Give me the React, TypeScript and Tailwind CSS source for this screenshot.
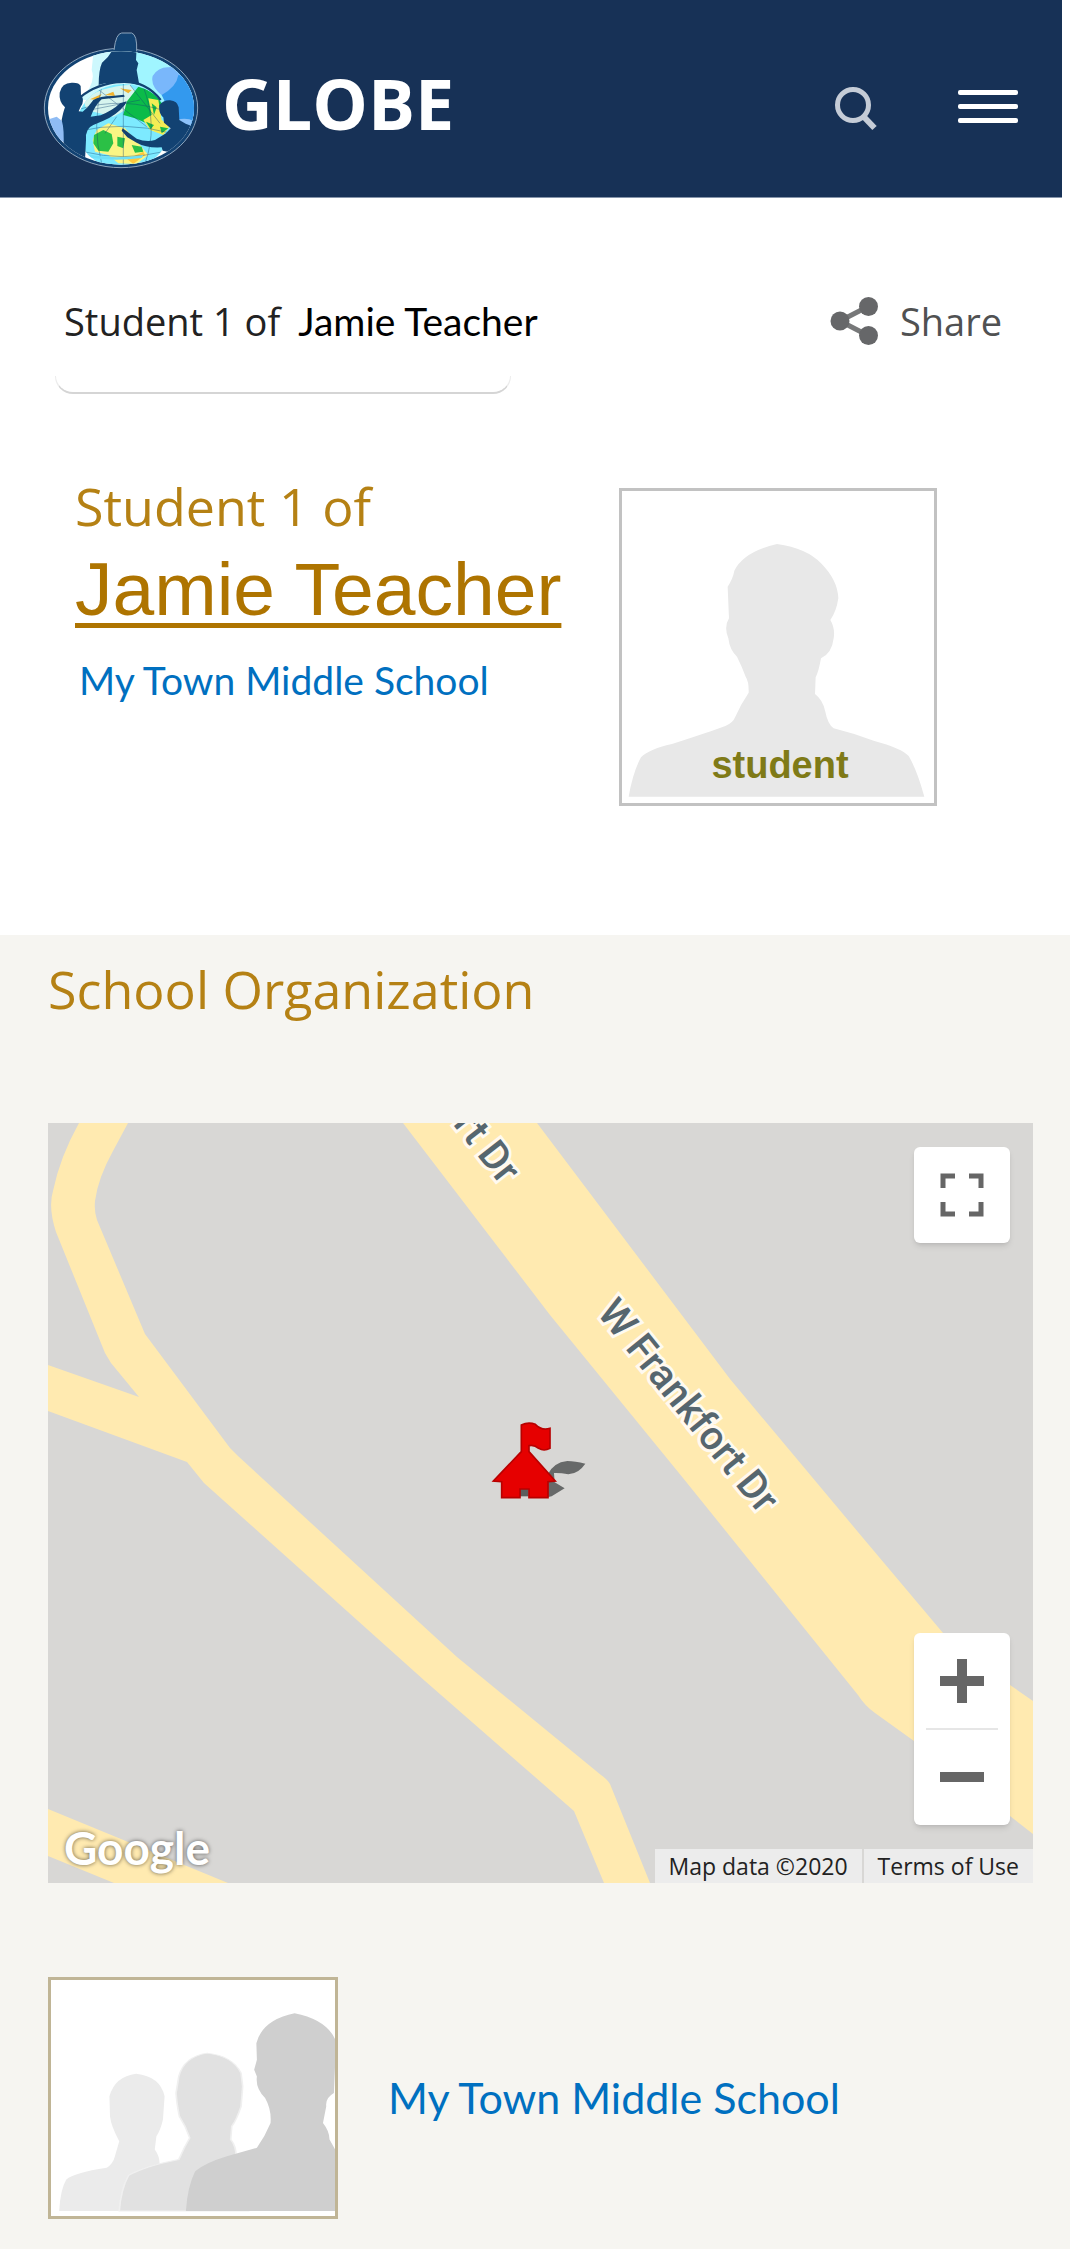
import type { ReactNode } from 'react';

const schoolName = 'My Town Middle School';
const teacherName = 'Jamie Teacher';

function GlobeLogo() {
  return (
    <svg viewBox="36 30 474 420" className="mt-0.5 h-[140px] w-[158px] shrink-0" aria-hidden="true">
      <defs>
        <clipPath id="oval">
          <ellipse cx="273" cy="264" rx="219" ry="170" />
        </clipPath>
        <clipPath id="earth">
          <ellipse cx="280" cy="320" rx="140" ry="128" />
        </clipPath>
      </defs>
      <ellipse cx="273" cy="264" rx="230" ry="179" fill="#124272" stroke="#8fa6bd" strokeWidth="3" />
      <path d="M252 90 Q258 40 275 39 L305 39 Q322 44 320 94" fill="#124272" stroke="#8fa6bd" strokeWidth="3" />
      <g clipPath="url(#oval)">
        <rect x="40" y="80" width="470" height="370" fill="#fff" />
        <path d="M192 80 L330 80 L330 240 L150 240 Q200 190 185 150Z" fill="#cdf8fd" />
        <path d="M310 80 L510 80 L510 330 L300 230Z" fill="#a0f5ff" />
        <path d="M368 168 Q385 140 418 142 Q450 120 520 140 L520 330 L440 300 L400 230 Q360 200 368 168Z" fill="#79b7fb" />
        <path d="M395 225 Q440 200 445 165 Q470 170 510 190 L510 320 L430 300Z" fill="#3399ee" />
        <path d="M440 300 Q470 290 495 305 L495 330 L450 325Z" fill="#8cc2fa" />
        <path d="M50 300 L80 290 L105 310 L108 370 L70 350Z" fill="#8fbcf4" />
        {/* Earth */}
        <g clipPath="url(#earth)">
          <rect x="130" y="180" width="300" height="270" fill="#7eeaff" />
          <path d="M160 240 Q210 200 300 195 L340 240 L250 290 L170 270Z" fill="#d6f6ee" />
          <path d="M225 225 L250 215 L255 228Z M180 238 L215 222 L205 240Z M270 205 L305 210 L295 220Z" fill="#f2b430" />
          <path d="M290 245 L325 200 L370 215 L395 250 L385 300 L350 310 L315 295 L280 285Z" fill="#0cbb4a" />
          <path d="M355 235 L385 240 L395 300 L420 318 L400 345 L360 330 L340 300 L365 285Z" fill="#f3ed55" />
          <path d="M365 250 L380 262 L372 285Z M390 320 L415 325 L395 340Z M348 305 L372 315 L362 328Z" fill="#18b948" />
          <path d="M200 330 L235 310 L285 325 L330 375 L355 405 L320 432 L265 430 L235 405 L195 395 L188 360Z" fill="#fbf584" />
          <path d="M192 345 L220 330 L245 342 L250 370 L235 395 L205 392 L190 370Z M262 350 L285 355 L280 385 L262 378Z M305 375 L335 380 L340 395 L315 398Z" fill="#2cc046" />
          <path d="M292 418 L340 395 L345 405 L310 432Z" fill="#ffc83c" />
          <g fill="none" stroke="#124272" strokeWidth="2" opacity=".6">
            <path d="M280 190 V450 M215 200 Q185 320 215 430 M340 200 Q385 320 345 430" />
            <path d="M140 270 Q280 225 425 280 M140 335 Q280 300 425 340 M160 395 Q280 425 400 395" />
            <path d="M200 205 L350 320 M300 195 L390 310 M180 270 L330 240 M225 340 L260 290" />
          </g>
          <path d="M165 402 Q250 420 340 405 L335 414 Q250 425 170 412Z" fill="#6fdff7" />
        </g>
        {/* People around the globe */}
        <path d="M252 80 L320 80 L318 120 L325 130 L320 150 L328 195 Q290 186 268 190 Q235 184 206 195 Q206 150 216 128 Q240 110 252 80Z" fill="#124272" />
        <path d="M150 232 Q200 190 280 184 Q350 185 392 240" fill="none" stroke="#124272" strokeWidth="7" />
        <path d="M105 262 Q86 245 89 218 Q95 188 125 188 Q148 187 152 198 L153 226 Q162 235 157 252 Q150 262 146 274 L158 275 Q175 262 190 240 Q210 228 245 228 L282 224 L284 230 L215 238 Q195 255 182 290 L212 286 Q250 270 270 250 L290 244 L285 254 Q260 285 220 302 L190 315 Q165 325 168 360 L165 420 L100 385 Q104 330 95 300 Q100 275 105 262Z" fill="#124272" />
        <path d="M400 292 Q385 280 388 256 Q400 240 420 241 Q442 243 446 262 L448 300 Q465 312 495 322 L480 345 L435 400 L398 392 L395 382 Q350 385 320 368 L292 352 L275 332 L278 325 L288 332 L320 356 Q350 368 375 360 L408 340 L422 325 L402 308Z" fill="#124272" />
      </g>
    </svg>
  );
}

function SiteHeader() {
  return (
    <header className="mr-2 flex h-[198px] items-center border-b border-[#8594aa] bg-[#173156] pl-[42px] pr-11">
      <GlobeLogo />
      <a href="#home" className="ml-[22px] mt-2 text-[70px] font-bold leading-none text-white font-['Open_Sans',sans-serif]">
        GLOBE
      </a>
      <div className="ml-auto mt-5 flex items-center gap-20">
        <button type="button" aria-label="Search">
          <svg viewBox="0 0 44 44" className="size-11" fill="none" stroke="#c5ccd7" strokeWidth="5">
            <circle cx="19" cy="18" r="15.5" />
            <path d="M29.500 29.500 L40.500 41" strokeWidth="6" />
          </svg>
        </button>
        <button type="button" aria-label="Menu" className="mb-1 flex w-[60px] flex-col gap-[9px]">
          <span className="h-[5px] rounded-xs bg-white" />
          <span className="h-[5px] rounded-xs bg-white" />
          <span className="h-[5px] rounded-xs bg-white" />
        </button>
      </div>
    </header>
  );
}

function ShareIcon() {
  return (
    <svg viewBox="0 0 48 48" className="size-12" fill="#666769" aria-hidden="true">
      <path d="M39 9 L10 24 L39 39" fill="none" stroke="#777879" strokeWidth="5" />
      <circle cx="10" cy="24" r="9.500" />
      <circle cx="38.500" cy="9.500" r="9.500" />
      <circle cx="38.500" cy="38.500" r="9.500" />
    </svg>
  );
}

function StudentAvatar() {
  return (
    <svg viewBox="56 54 954 954" className="mt-1.5 size-[318px] shrink-0" role="img" aria-label="Student avatar">
      <rect x="60.500" y="58.500" width="945" height="945" fill="#fff" stroke="#c2c2c2" strokeWidth="9" />
      <path
        d="M85 980 Q98 905 122 862 Q145 838 215 822 Q330 785 375 768 Q398 758 405 740 Q420 705 445 668 Q446 635 436 620 Q425 590 410 560 Q388 540 384 505 Q370 470 386 445 L382 350 Q398 325 402 302 Q430 245 530 222 Q620 235 662 280 Q712 330 714 385 Q708 425 690 450 Q705 475 700 505 Q695 550 662 565 Q655 605 646 622 L644 672 Q668 690 675 725 Q682 762 700 775 Q760 790 820 812 Q905 835 925 858 Q950 900 972 980Z"
        fill="#e8e8e8"
      />
      <text x="539" y="923" textAnchor="middle" className="fill-[#7f7a17] text-[114px] font-bold font-['Liberation_Sans',Arial,sans-serif]">
        student
      </text>
    </svg>
  );
}

function SchoolMarker() {
  return (
    <g transform="translate(412 278) scale(.3333)">
      <path
        d="M262 222 Q280 184 322 180 Q345 180 376 188 Q356 218 325 220 Q300 215 282 216 L284 244 L314 262 L275 286 L255 290Z"
        fill="#5b5d5d"
        opacity=".9"
      />
      <rect x="180" y="260" width="26" height="26" fill="#5b5d5d" />
      <path
        d="M184 152 L184 72 Q205 62 226 70 Q245 90 270 82 L270 142 Q252 152 236 142 Q222 130 207 134 L207 152 L286 240 L264 242 L264 290 L207 290 L207 264 L180 264 L180 290 L125 290 L125 242 L100 240Z"
        fill="#e60000"
        stroke="#b80000"
        strokeWidth="5"
      />
    </g>
  );
}

const roadLabel =
  "fill-[#56666e] stroke-[#fffaf0] text-[40px] font-medium [paint-order:stroke] font-['Roboto',sans-serif]";

function MapCanvas() {
  return (
    <svg viewBox="0 0 985 760" preserveAspectRatio="xMidYMid slice" className="h-full w-full" role="img" aria-label="Map of the school">
      <rect width="985" height="760" fill="#d8d7d5" />
      <g fill="#ffeab0">
        <path d="M355 0 L489 0 L682 256 L815 415 L895 510 Q925 545 962 562 L985 578 L985 711 L866 618 L827 590 Q817 583 810 572 L635 355 L502 192Z" />
        <path d="M31 0 L80 0 L65 28 Q50 55 47 78 Q46 88 49 97 L97 211 L182 325 L190 333 L409 534 L553 652 Q559 656 562 661 L602 760 L556 760 L526 688 L377 558 L156 360 L139 339 L0 288 L0 242 L91 274 L63 240 L57 230 L8 109 Q0 84 5 68 Q12 34 31 0Z" />
        <path d="M0 686 L180 760 L66 760 L0 733Z" />
      </g>
      <text transform="translate(453 63) rotate(52)" textAnchor="end" strokeWidth="6" className={roadLabel}>
        rt Dr
      </text>
      <text transform="translate(548 190) rotate(51)" strokeWidth="6" className={roadLabel}>
        W Frankfort Dr
      </text>
      <SchoolMarker />
    </svg>
  );
}

function ZoomButton({ label, children }: { label: string; children: ReactNode }) {
  return (
    <button type="button" aria-label={label} className="flex size-24 items-center justify-center">
      <svg viewBox="0 0 44 44" className="size-11" fill="none" stroke="#666" strokeWidth="10">
        {children}
      </svg>
    </button>
  );
}

function SchoolMap() {
  return (
    <div className="relative mt-[98px] h-[760px] overflow-hidden">
      <MapCanvas />
      <button
        type="button"
        aria-label="Toggle fullscreen view"
        className="absolute right-[23px] top-6 flex size-24 items-center justify-center rounded-md bg-white shadow-md"
      >
        <svg viewBox="0 0 44 44" className="size-11" fill="none" stroke="#666" strokeWidth="5">
          <path d="M3 15 V3 H15 M29 3 H41 V15 M41 29 V41 H29 M15 41 H3 V29" />
        </svg>
      </button>
      <div className="absolute bottom-[58px] right-[23px] rounded-md bg-white shadow-md">
        <ZoomButton label="Zoom in">
          <path d="M0 22 H44 M22 0 V44" />
        </ZoomButton>
        <div className="mx-3 -my-px h-0.5 bg-[#e6e6e6]" />
        <ZoomButton label="Zoom out">
          <path d="M0 22 H44" />
        </ZoomButton>
      </div>
      <span className="absolute bottom-2 left-4 text-[46px] font-bold leading-[54px] text-white [text-shadow:0_0_4px_rgba(0,0,0,0.6)] font-['Lato',sans-serif]">
        Google
      </span>
      <div className="absolute bottom-0 right-0 flex text-[23px] leading-[34px] text-[#222] font-['Open_Sans',sans-serif]">
        <span className="bg-[#ececec] px-3.5">Map data ©2020</span>
        <a href="#terms" className="ml-0.5 bg-[#ececec] px-3.5">Terms of Use</a>
      </div>
    </div>
  );
}

function GroupThumbnail() {
  return (
    <div className="h-[242px] w-[290px] shrink-0 overflow-hidden border-[3px] border-[#c0b596] bg-white">
      <svg viewBox="38 60 520 710" preserveAspectRatio="none" className="h-full w-full" role="img" aria-label="School group">
        <path
          d="M53 755 Q55 690 66 660 Q80 640 140 625 Q152 612 155 590 L163 545 Q148 500 146 470 L145 410 Q155 350 194 342 Q238 350 246 410 L243 480 Q238 515 231 530 L228 570 Q237 590 237 615 L260 650 L260 755Z"
          fill="#ebebeb"
        />
        <path
          d="M163 755 Q166 690 180 648 Q210 620 272 600 L282 565 L292 535 Q285 500 273 470 Q268 430 267 400 L272 350 Q282 290 324 280 Q370 288 386 340 L389 380 L386 440 Q378 480 369 500 L367 540 Q377 560 377 590 L400 640 L400 755Z"
          fill="#e1e1e1"
          stroke="#f0f0f0"
          strokeWidth="3"
        />
        <path
          d="M285 755 Q288 680 302 635 Q320 610 360 590 L415 565 Q430 530 440 490 Q442 450 430 415 Q412 385 415 350 L410 330 L415 300 L414 250 Q425 180 484 160 Q545 180 560 245 L556 400 Q540 415 542 440 L536 490 Q548 515 548 540 L560 575 L700 640 L700 755Z"
          fill="#cfcfcf"
        />
      </svg>
    </div>
  );
}

export default function App() {
  return (
    <div className="min-h-screen bg-[#f6f5f1]">
      <div className="bg-white">
        <SiteHeader />

        {/* Breadcrumb and share */}
        <div className="flex items-center justify-between pl-16 pr-[68px] pt-[95px] text-[38px] leading-[56px] font-['Open_Sans',sans-serif]">
          <p className="flex items-baseline gap-[18px] text-[#222]">
            Student 1 of
            <span className="text-[39px] text-black font-['Lato',sans-serif]">{teacherName}</span>
          </p>
          <button type="button" className="flex items-center gap-[22px] text-[#505152]">
            <ShareIcon />
            Share
          </button>
        </div>
        <div className="ml-[55px] mt-[27px] h-[18px] w-[456px] rounded-b-[18px] border-x border-b-2 border-x-[#ececec] border-b-[#d5d5d5]" />

        {/* Profile */}
        <section className="flex items-start gap-[58px] pb-[129px] pl-[75px] pt-[88px]">
          <div>
            <h1 className="text-[52px] leading-[48px] text-[#b58114] font-['Open_Sans',sans-serif]">
              Student 1 of
              <a
                href="#teacher"
                className="mt-[21px] block text-[75px] leading-[76px] text-[#ae7400] underline decoration-[5px] underline-offset-[8px] font-['Liberation_Sans',Arial,sans-serif]"
              >
                {teacherName}
              </a>
            </h1>
            <a href="#school" className="ml-1 mt-[29px] block text-[39px] leading-[48px] text-[#0070c0] font-['Lato',sans-serif]">
              {schoolName}
            </a>
          </div>
          <StudentAvatar />
        </section>
      </div>

      <main className="pb-[30px] pl-12 pr-[37px] pt-[18px]">
        <h2 className="text-[52px] leading-[72px] text-[#b58114] font-['Open_Sans',sans-serif]">School Organization</h2>
        <SchoolMap />
        <div className="mt-[94px] flex items-center gap-[50px]">
          <GroupThumbnail />
          <a href="#school" className="text-[43px] leading-[56px] text-[#0070c0] font-['Lato',sans-serif]">
            {schoolName}
          </a>
        </div>
      </main>
    </div>
  );
}
